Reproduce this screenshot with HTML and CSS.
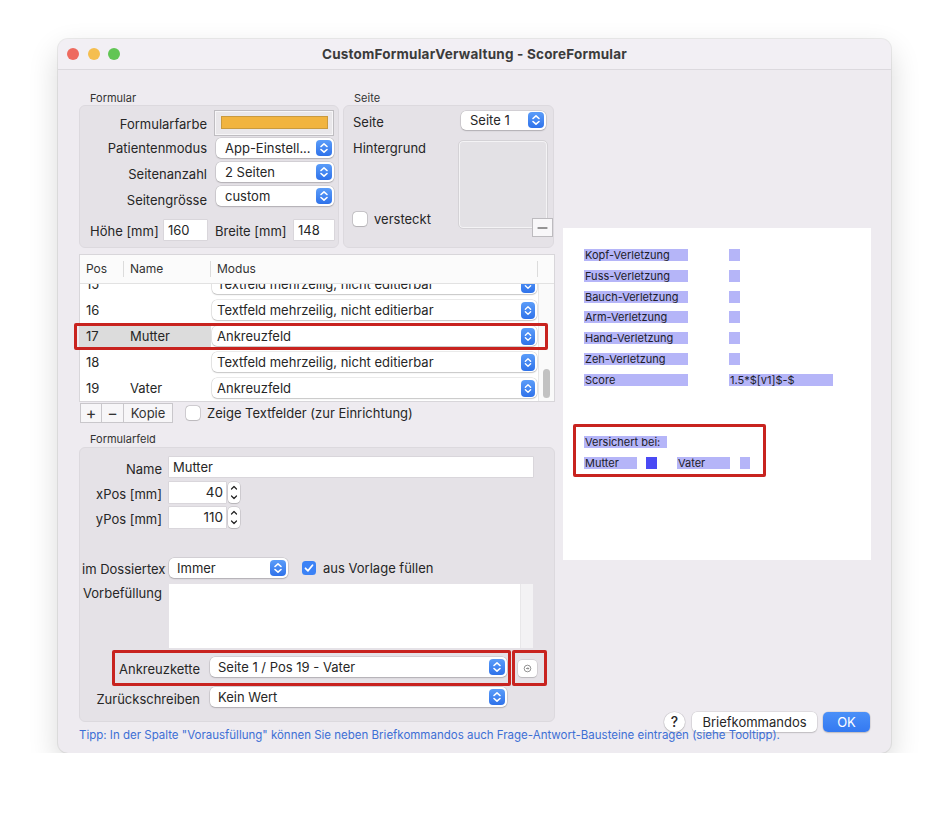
FILE: index.html
```html
<!DOCTYPE html>
<html lang="de">
<head>
<meta charset="utf-8">
<title>CustomFormularVerwaltung - ScoreFormular</title>
<link rel="stylesheet" href="styles.css">
</head>
<body>
<div class="window">
  <div class="titlebar">
    <div class="lights"><span class="light red"></span><span class="light yellow"></span><span class="light green"></span></div>
    <div class="title">CustomFormularVerwaltung - ScoreFormular</div>
    <div></div>
  </div>
  <div class="content">
    <div class="main">
      <div class="left">
        <div class="top-row">
          <div class="group formular">
            <div class="group-label">Formular</div>
            <div class="group-box fbox">
              <div class="frow r1"><span class="flabel">Formularfarbe</span><div class="colorwell"><div class="swatch"></div></div></div>
              <div class="frow r2"><span class="flabel">Patientenmodus</span>
                <div class="popup fpop"><span class="ptext">App-Einstell...</span><span class="stepper"><svg viewBox="0 0 16 16"><path d="M5 6.5 8 3.8 11 6.5M5 9.5 8 12.2 11 9.5"/></svg></span></div></div>
              <div class="frow r3"><span class="flabel">Seitenanzahl</span>
                <div class="popup fpop"><span class="ptext">2 Seiten</span><span class="stepper"><svg viewBox="0 0 16 16"><path d="M5 6.5 8 3.8 11 6.5M5 9.5 8 12.2 11 9.5"/></svg></span></div></div>
              <div class="frow r4"><span class="flabel">Seitengrösse</span>
                <div class="popup fpop"><span class="ptext">custom</span><span class="stepper"><svg viewBox="0 0 16 16"><path d="M5 6.5 8 3.8 11 6.5M5 9.5 8 12.2 11 9.5"/></svg></span></div></div>
              <div class="sizerow">
                <span class="slabel">Höhe [mm]</span><span class="tfield">160</span>
                <span class="slabel blabel">Breite [mm]</span><span class="tfield">148</span>
              </div>
            </div>
          </div>
          <div class="group seite">
            <div class="group-label">Seite</div>
            <div class="group-box sbox">
              <div class="srow1"><span class="slabel1">Seite</span>
                <div class="popup spop"><span class="ptext">Seite 1</span><span class="stepper"><svg viewBox="0 0 16 16"><path d="M5 6.5 8 3.8 11 6.5M5 9.5 8 12.2 11 9.5"/></svg></span></div></div>
              <div class="srow2">
                <div class="scol">
                  <span class="hlabel">Hintergrund</span>
                  <div class="checkrow"><span class="checkbox"></span><span class="clabel">versteckt</span></div>
                </div>
                <div class="imagewell"></div>
              </div>
              <div class="minusbtn"><svg viewBox="0 0 21 19"><path d="M5 10h11"/></svg></div>
            </div>
          </div>
        </div>

        <div class="table">
          <div class="thead">
            <div class="th c-pos">Pos</div><div class="th c-name">Name</div><div class="th c-mod">Modus</div><div class="th c-fill"></div>
          </div>
          <div class="tbody">
            <div class="rows">
              <div class="trow"><div class="td c-pos">15</div><div class="td c-name"></div><div class="td c-mod"><div class="popup tpop"><span class="ptext">Textfeld mehrzeilig, nicht editierbar</span><span class="stepper"><svg viewBox="0 0 16 16"><path d="M5 6.5 8 3.8 11 6.5M5 9.5 8 12.2 11 9.5"/></svg></span></div></div></div>
              <div class="trow"><div class="td c-pos">16</div><div class="td c-name"></div><div class="td c-mod"><div class="popup tpop"><span class="ptext">Textfeld mehrzeilig, nicht editierbar</span><span class="stepper"><svg viewBox="0 0 16 16"><path d="M5 6.5 8 3.8 11 6.5M5 9.5 8 12.2 11 9.5"/></svg></span></div></div></div>
              <div class="trow sel"><div class="td c-pos">17</div><div class="td c-name">Mutter</div><div class="td c-mod"><div class="popup tpop"><span class="ptext">Ankreuzfeld</span><span class="stepper"><svg viewBox="0 0 16 16"><path d="M5 6.5 8 3.8 11 6.5M5 9.5 8 12.2 11 9.5"/></svg></span></div></div></div>
              <div class="trow"><div class="td c-pos">18</div><div class="td c-name"></div><div class="td c-mod"><div class="popup tpop"><span class="ptext">Textfeld mehrzeilig, nicht editierbar</span><span class="stepper"><svg viewBox="0 0 16 16"><path d="M5 6.5 8 3.8 11 6.5M5 9.5 8 12.2 11 9.5"/></svg></span></div></div></div>
              <div class="trow"><div class="td c-pos">19</div><div class="td c-name">Vater</div><div class="td c-mod"><div class="popup tpop"><span class="ptext">Ankreuzfeld</span><span class="stepper"><svg viewBox="0 0 16 16"><path d="M5 6.5 8 3.8 11 6.5M5 9.5 8 12.2 11 9.5"/></svg></span></div></div></div>
            </div>
            <div class="scrollbar"><div class="thumb"></div></div>
          </div>
          <div class="redbox rb-row"></div>
        </div>

        <div class="tablebtns">
          <span class="sqbtn plus">+</span><span class="sqbtn minus">−</span><span class="sqbtn kopie">Kopie</span>
          <span class="checkbox cb2"></span><span class="clabel">Zeige Textfelder (zur Einrichtung)</span>
        </div>

        <div class="group-label fflabel">Formularfeld</div>
        <div class="group-box ffbox">
          <div class="ffrow name"><span class="rlabel">Name</span><span class="tfield wide">Mutter</span></div>
          <div class="ffrow num1"><span class="rlabel">xPos [mm]</span><span class="tfield num">40</span>
            <span class="numstep"><svg viewBox="0 0 12 21"><path d="M3.5 7 6 4.5 8.5 7M3.5 14 6 16.5 8.5 14"/></svg></span></div>
          <div class="ffrow num2"><span class="rlabel">yPos [mm]</span><span class="tfield num">110</span>
            <span class="numstep"><svg viewBox="0 0 12 21"><path d="M3.5 7 6 4.5 8.5 7M3.5 14 6 16.5 8.5 14"/></svg></span></div>
          <div class="ffrow dossier"><span class="llabel">im Dossiertext</span>
            <div class="popup dpop"><span class="ptext">Immer</span><span class="stepper"><svg viewBox="0 0 16 16"><path d="M5 6.5 8 3.8 11 6.5M5 9.5 8 12.2 11 9.5"/></svg></span></div>
            <span class="checkbox checked"><svg viewBox="0 0 14 14"><path d="M3.5 7.3 6 9.8 10.5 4.2"/></svg></span><span class="clabel">aus Vorlage füllen</span></div>
          <div class="ffrow vorbe"><span class="llabel vlabel">Vorbefüllung</span><div class="textarea"></div><div class="tascroll"></div></div>
          <div class="ffrow ankreuz"><span class="alabel">Ankreuzkette</span>
            <div class="popup apop"><span class="ptext">Seite 1 / Pos 19 - Vater</span><span class="stepper"><svg viewBox="0 0 16 16"><path d="M5 6.5 8 3.8 11 6.5M5 9.5 8 12.2 11 9.5"/></svg></span></div>
            <span class="smallbtn"><svg viewBox="0 0 10 10"><circle cx="5" cy="5" r="3.7"/><path d="M3.3 5h3.2M5.2 3.7 6.5 5 5.2 6.3"/></svg></span>
            <div class="redbox rb-a1"></div><div class="redbox rb-a2"></div>
          </div>
          <div class="ffrow zurueck"><span class="alabel">Zurückschreiben</span>
            <div class="popup apop"><span class="ptext">Kein Wert</span><span class="stepper"><svg viewBox="0 0 16 16"><path d="M5 6.5 8 3.8 11 6.5M5 9.5 8 12.2 11 9.5"/></svg></span></div></div>
        </div>
      </div>

      <div class="right">
        <div class="preview">
          <div class="pfields">
            <div class="prow"><span class="plabel">Kopf-Verletzung</span><span class="psq"></span></div>
            <div class="prow"><span class="plabel">Fuss-Verletzung</span><span class="psq"></span></div>
            <div class="prow"><span class="plabel">Bauch-Verletzung</span><span class="psq"></span></div>
            <div class="prow"><span class="plabel">Arm-Verletzung</span><span class="psq"></span></div>
            <div class="prow"><span class="plabel">Hand-Verletzung</span><span class="psq"></span></div>
            <div class="prow"><span class="plabel">Zeh-Verletzung</span><span class="psq"></span></div>
            <div class="prow last"><span class="plabel">Score</span><span class="plabel pval">1.5*$[v1]$-$</span></div>
          </div>
          <div class="versichert">
            <span class="plabel vb">Versichert bei:</span>
            <div class="vrow"><span class="plabel mv">Mutter</span><span class="psq dark"></span><span class="plabel mv vater">Vater</span><span class="psq sq2"></span></div>
          </div>
          <div class="redbox rb-prev"></div>
        </div>
        <div class="buttons">
          <span class="help">?</span>
          <span class="btn brief">Briefkommandos</span>
          <span class="btn ok">OK</span>
        </div>
      </div>
    </div>
    <div class="tip">Tipp: In der Spalte "Vorausfüllung" können Sie neben Briefkommandos auch Frage-Antwort-Bausteine eintragen (siehe Tooltipp).</div>
  </div>
</div>
</body>
</html>
```
FILE: styles.css
```css
* { box-sizing: border-box; }
html, body { margin: 0; padding: 0; background: #fff; }
body { font-family: Inter, "Noto Sans", sans-serif; font-size: 13px; color: #262626; }

.window {
  margin: 39px 0 0 58px; width: 833px; height: 714px;
  background: #eeebf0; border-radius: 10px; overflow: hidden;
  box-shadow: 0 0 0 1px rgba(0,0,0,.07), 0 12px 30px rgba(0,0,0,.16);
  display: flex; flex-direction: column;
}
.titlebar {
  height: 31px; flex: none; display: grid; grid-template-columns: 1fr auto 1fr;
  align-items: center; border-bottom: 1px solid #dcd9de; background: #f2eff4;
}
.lights { display: flex; gap: 8.5px; padding-left: 9px; }
.light { width: 12px; height: 12px; border-radius: 50%; }
.red { background: #ee6a5f; }
.yellow { background: #f5be4f; }
.green { background: #61c554; }
.title { font-weight: 700; font-size: 13.5px; letter-spacing: .2px; color: #3b3b3b; }

.content { flex: 1; padding: 21px 20px 0 21px; display: flex; flex-direction: column; }
.main { display: flex; gap: 8px; }
.left { width: 476px; flex: none; }
.right { width: 308px; flex: none; display: flex; flex-direction: column; padding-top: 137px; }

.top-row { display: flex; gap: 4px; }
.group-label { font-size: 11px; line-height: 14px; height: 14px; padding-left: 11px; color: #333; }
.group-box { background: #e5e2e7; border: 1px solid #dcd9de; border-radius: 6px; }
.formular { width: 260px; }
.seite { width: 211px; }

.fbox { height: 143px; padding: 4px 0 0 0; }
.frow { display: flex; align-items: center; height: 20px; }
.flabel { width: 127px; text-align: right; padding-right: 0; margin-top: 3px; white-space: nowrap; }
.r1 { height: 26px; }
.r1 .flabel { margin-top: 1px; }
.r2 { margin-top: 2px; }
.r2 .flabel { margin-top: 0; }
.r3 { margin-top: 4px; }
.r4 { margin-top: 4px; }
.r4 .flabel { margin-top: 7px; }
.colorwell {
  margin-left: 7px; width: 120px; height: 26px; padding: 5px 5px 6px 6px;
  background: #e9e7ea; border: 1px solid #bfbdc1; box-shadow: inset 0 0 0 1px #f7f6f8;
}
.swatch { width: 100%; height: 100%; background: #f1b43f; border: 1px solid #c99a3e; }
.fpop { margin-left: 9px; width: 118px; }

.popup {
  display: flex; align-items: center; height: 20px; background: #fff; border-radius: 5px;
  box-shadow: 0 0 0 .5px rgba(0,0,0,.16), 0 1px 1.5px rgba(0,0,0,.16);
  padding: 0 2px 0 9px;
}
.ptext { flex: 1; white-space: nowrap; overflow: hidden; }
.stepper {
  flex: none; width: 16px; height: 16px; border-radius: 4px;
  background: linear-gradient(#5b9df9, #2f72ea); display: flex;
}
.stepper svg, .numstep svg, .smallbtn svg, .checkbox svg, .minusbtn svg { width: 100%; height: 100%; display: block; }
.stepper path { fill: none; stroke: #fff; stroke-width: 1.6; stroke-linecap: round; stroke-linejoin: round; }

.sizerow { display: grid; grid-template-columns: 74px 43px 87px 40px; align-items: center; height: 20px; margin-top: 14px; padding-left: 10px; }
.slabel { white-space: nowrap; margin-top: 2px; }
.blabel { padding-left: 8px; }
.tfield {
  display: block; height: 20px; line-height: 20px; background: #fff; padding-left: 4px;
  box-shadow: 0 0 0 .5px rgba(0,0,0,.1); white-space: nowrap;
}

.sbox { height: 143px; padding: 4px 5px 0 9px; position: relative; }
.srow1 { display: flex; justify-content: space-between; align-items: center; height: 20px; padding-right: 2px; }
.slabel1 { margin-top: 4px; }
.spop { width: 85px; height: 19px; }
.srow2 { display: flex; margin-top: 10px; }
.scol { flex: 1; display: flex; flex-direction: column; justify-content: space-between; padding-bottom: 2px; }
.hlabel { line-height: 16px; }
.checkrow { display: flex; align-items: center; }
.checkbox {
  display: inline-block; flex: none; width: 14px; height: 14px; border-radius: 3.5px; background: #fff;
  box-shadow: 0 0 0 .5px rgba(0,0,0,.25), 0 .5px 1px rgba(0,0,0,.1);
}
.clabel { margin-left: 7px; white-space: nowrap; }
.imagewell { width: 90px; height: 89px; background: #e3e1e5; border: 1px solid #d4d2d6; border-radius: 5px; box-shadow: inset 0 0 0 1px #f4f3f5; }
.minusbtn {
  position: absolute; left: 188px; top: 112px; width: 21px; height: 19px;
  background: #f8f7f9; border: 1px solid #bdbbbf;
}
.minusbtn path { stroke: #333; stroke-width: 1.2; }

.table {
  position: relative; margin-top: 6px; width: 476px; height: 148px;
  background: #fff; border: 1px solid #d8d6da;
}
.thead { display: flex; height: 29px; border-bottom: 1px solid #e2e2e2; background: #fbfbfb; }
.th {
  line-height: 28px; padding-left: 6px; color: #333; font-size: 12px;
  background: linear-gradient(#dcdcdc, #dcdcdc) right center / 1px 16px no-repeat;
}
.c-pos { width: 44px; }
.c-name { width: 87px; }
.c-mod { width: 327px; }
.c-fill { width: 16px; background: none; }
.th.c-mod { padding-left: 6px; }
.tbody { display: flex; height: 117px; overflow: hidden; }
.rows { width: 458px; margin-top: -13px; }
.trow { display: flex; height: 26px; align-items: center; }
.td { height: 26px; line-height: 26px; padding-left: 6px; white-space: nowrap; }
.td.c-mod { padding: 3px 1px; }
.trow.sel .c-pos, .trow.sel .c-name { background: #dcdcdc; }
.tpop { height: 20px; padding-left: 5px; }
.tpop .stepper { height: 17px; width: 14px; }
.scrollbar {
  width: 16px; border-left: 1px solid #e8e8e8; background: #fafafa;
  display: flex; flex-direction: column; justify-content: flex-end; padding: 0 0 3px 4px;
}
.thumb { width: 7px; height: 29px; border-radius: 4px; background: #c2c2c2; }

.redbox { position: absolute; border: 3px solid #c8231f; border-radius: 2px; }
.rb-row { left: -6px; top: 68px; width: 474px; height: 27px; }

.tablebtns { display: flex; align-items: center; height: 20px; margin-top: 1px; }
.sqbtn {
  height: 20px; line-height: 18px; text-align: center; background: #f7f6f8;
  border: 1px solid #c9c7cb; color: #333;
}
.plus { width: 22px; margin-left: 1px; font-size: 16px; }
.minus { width: 23px; margin-left: -1px; font-size: 16px; }
.kopie { width: 50px; margin-left: -1px; }
.cb2 { margin-left: 13px; }

.fflabel { margin-top: 9px; height: 15px; }
.ffbox { height: 275px; padding: 9px 0 0 2px; position: relative; }
.ffrow { display: flex; align-items: center; height: 20px; position: relative; }
.rlabel { width: 84px; text-align: right; padding-right: 4px; margin-top: 3px; white-space: nowrap; flex: none; }
.llabel { width: 84px; white-space: nowrap; overflow: hidden; flex: none; margin-top: 2px; }
.ffrow .tfield { margin-left: 3px; }
.wide { width: 364px; }
.num1 { margin-top: 5px; height: 21px; }
.num2 { margin-top: 4px; height: 21px; }
.num { width: 57px; height: 21px; line-height: 21px; text-align: right; padding-right: 3px; font-size: 13.5px; }
.numstep {
  width: 12px; height: 21px; margin-left: 2px; background: #fff; border-radius: 4px;
  box-shadow: 0 0 0 .5px rgba(0,0,0,.18), 0 1px 1px rgba(0,0,0,.12);
}
.numstep path { fill: none; stroke: #222; stroke-width: 1.2; stroke-linecap: round; stroke-linejoin: round; }
.dossier { margin-top: 30px; }
.dpop { margin-left: 3px; width: 119px; padding-left: 8px; }
.checked { margin-left: 14px; background: #3b82f6; box-shadow: none; }
.checked path { fill: none; stroke: #fff; stroke-width: 1.8; stroke-linecap: round; stroke-linejoin: round; }
.vorbe { margin-top: 6px; height: 64px; align-items: flex-start; }
.vlabel { line-height: 16px; margin-top: 1px; padding-left: 1px; }
.textarea { width: 351px; height: 64px; margin-left: 3px; background: #fff; }
.tascroll { width: 13px; height: 64px; background: #f3f2f4; border-left: 1px solid #e8e7e9; }
.ankreuz { margin-top: 9px; }
.zurueck { margin-top: 10px; }
.alabel { width: 118px; text-align: right; white-space: nowrap; margin-top: 3px; flex: none; }
.apop { margin-left: 10px; width: 297px; padding-left: 8px; }
.smallbtn {
  width: 19px; height: 17px; margin-left: 11px; margin-top: 3px; background: #fff; border-radius: 4px;
  box-shadow: 0 0 0 .5px rgba(0,0,0,.14), 0 1px 1px rgba(0,0,0,.12); padding: 4px 5px;
}
.smallbtn circle, .smallbtn path { fill: none; stroke: #7a7a7a; stroke-width: .9; }
.rb-a1 { left: 30px; top: -7px; width: 399px; height: 36px; }
.rb-a2 { left: 430px; top: -7px; width: 35px; height: 36px; }

.tip { margin-top: 7px; font-size: 11.5px; line-height: 13px; color: #3d6fd5; white-space: nowrap; }

.preview { position: relative; height: 332px; background: #fff; padding: 21px 0 0 21px; }
.pfields { display: flex; flex-direction: column; gap: 8.8px; }
.prow { display: flex; height: 12px; }
.plabel {
  display: block; width: 104px; height: 12px; background: #b5b5f8; font-size: 11px; line-height: 13px;
  color: #1c1c2a; white-space: nowrap; overflow: hidden; padding-left: 1px;
}
.psq { display: block; width: 11px; height: 12px; margin-left: 41px; background: #b5b5f8; }
.pval { margin-left: 41px; }
.versichert { margin-top: 50px; }
.vb { width: 83px; }
.vrow { display: flex; margin-top: 9px; }
.mv { width: 53px; }
.psq.dark { margin-left: 9px; background: #4a4af4; }
.vater { margin-left: 20px; }
.sq2 { margin-left: 10px; width: 10px; }
.rb-prev { left: 10px; top: 196px; width: 193px; height: 53px; }

.buttons { margin-top: auto; margin-bottom: -10px; margin-right: 1px; display: flex; justify-content: flex-end; align-items: center; height: 20px; }
.help {
  width: 21px; height: 20px; border-radius: 50%; background: #fff; text-align: center; line-height: 20px;
  font-size: 14px; font-weight: 500; box-shadow: 0 0 0 .5px rgba(0,0,0,.12), 0 1px 1.5px rgba(0,0,0,.15);
}
.btn {
  height: 20px; line-height: 20px; border-radius: 5px; text-align: center;
  box-shadow: 0 0 0 .5px rgba(0,0,0,.12), 0 1px 1.5px rgba(0,0,0,.15);
}
.brief { width: 125px; margin-left: 7px; background: #fff; }
.ok { width: 47px; margin-left: 6px; background: linear-gradient(#4a90f8, #3479f1); color: #fff; }
```
